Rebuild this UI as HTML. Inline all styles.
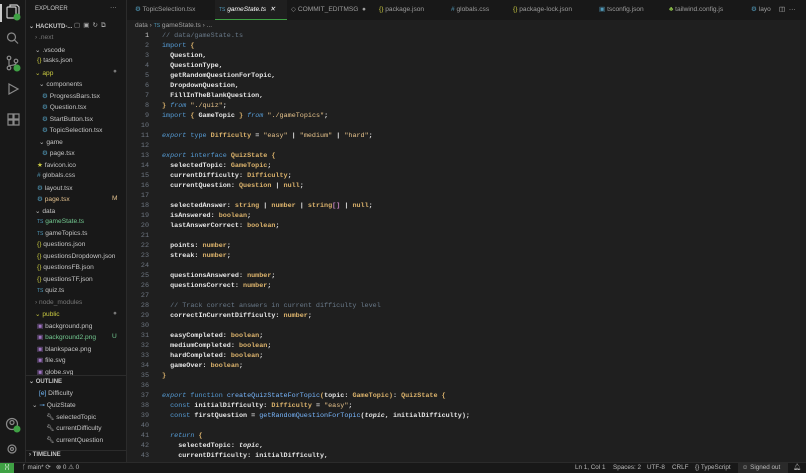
<!DOCTYPE html>
<html><head><meta charset="utf-8"><style>
*{margin:0;padding:0;box-sizing:border-box}
body{width:806px;height:473px;background:#1f1f1f;overflow:hidden;font-family:"Liberation Sans",sans-serif;color:#ccc;position:relative}
.act{position:absolute;left:0;top:0;width:26px;height:462px;background:#181818;border-right:1px solid #2b2b2b}
.side{position:absolute;left:26px;top:0;width:101px;height:462px;background:#181818;border-right:1px solid #2b2b2b;font-size:6.6px;overflow:hidden}
.side .r{position:absolute;white-space:nowrap;color:#c5c5c5}
.tabs{position:absolute;left:127px;top:0;right:0;height:20px;background:#181818;font-size:6.6px}
.tab{position:absolute;top:0;height:20px;line-height:20px;color:#9d9d9d;white-space:nowrap}
.bc{position:absolute;left:127px;top:20px;right:0;height:11px;font-size:6.6px;color:#a0a0a0;line-height:11px;padding-left:8px}
.code{position:absolute;left:127px;top:32px;right:6px;font-family:"Liberation Mono",monospace;font-size:6.75px}
.ln{position:absolute;width:22px;text-align:right;color:#6e7681;left:0}
.tx{position:absolute;left:35px;white-space:pre;color:#e6e6e6;font-weight:bold}
.k{color:#569cd6;font-weight:normal}.ki{color:#569cd6;font-style:italic;font-weight:normal}
.t{color:#dcb36c}.s{color:#e8c48c;font-weight:normal}.f{color:#79b8ff;font-weight:normal}.c{color:#6a7a8a;font-weight:normal}.p{color:#d4d4d4;font-weight:normal}
.status{position:absolute;left:0;top:462px;width:806px;height:11px;background:#181818;border-top:1px solid #2b2b2b;font-size:6.3px;color:#bbb;line-height:10px}
.status span{position:absolute;top:0;white-space:nowrap}
#sd{position:absolute;left:0;top:2px;width:101px;height:373px}
</style></head><body>
<div class="act">
 <div style="position:absolute;left:0;top:4px;width:2px;height:18px;background:#ccc"></div>
 <svg width="26" height="150" style="position:absolute;left:0;top:0" fill="none" stroke="#8a8a8a" stroke-width="1.2">
  <rect x="7" y="7" width="9" height="11" rx="1" stroke="#ccc"/><path d="M10 7V5h7l2 2v9h-3" stroke="#ccc"/>
  <circle cx="17" cy="17" r="3.5" fill="#3fa144" stroke="none"/>
  <circle cx="11.5" cy="37" r="4"/><path d="M14.5 40l3.5 3.5"/>
  <circle cx="9" cy="58" r="1.8"/><circle cx="9" cy="68" r="1.8"/><circle cx="16" cy="61" r="1.8"/><path d="M9 60v6M16 63c0 3-7 2-7 3"/>
  <circle cx="17" cy="68" r="3.5" fill="#3fa144" stroke="none"/>
  <path d="M9 84l9 5-9 5z"/><path d="M8 119h5v-5h-5zM14 119h5v-5h-5zM8 125h5v-5h-5zM14 125h5v-5h-5z"/>
 </svg>
 <svg width="26" height="60" style="position:absolute;left:0;top:412px" fill="none" stroke="#8a8a8a" stroke-width="1.2">
  <circle cx="12" cy="12" r="5.5"/><circle cx="12" cy="10.5" r="2"/><circle cx="17" cy="17" r="3.5" fill="#3fa144" stroke="none"/>
  <circle cx="12" cy="37" r="4"/><circle cx="12" cy="37" r="1.5"/>
 </svg>
</div>
<div class="side">
 <div class="r" style="left:9px;top:6px;font-size:6px">EXPLORER</div>
 <div class="r" style="left:84px;top:4px">···</div>
 <div id="sd">
 <div class="r" style="left:3px;top:21px;font-weight:bold;font-size:6px">⌄ HACKUTD-...</div>
 <div class="r" style="left:48px;top:19px;color:#aaa;letter-spacing:3px">▢▣↻⧉</div>
 <div class="r" style="left:9px;top:32px;color:#777">› .next</div>
 <div class="r" style="left:9px;top:44px">⌄ .vscode</div>
 <div class="r" style="left:11px;top:55px"><span style="color:#cbcb41">{}</span> tasks.json</div>
 <div class="r" style="left:9px;top:67px;color:#cbcb41">⌄ app</div>
 <div class="r" style="left:87px;top:66px;color:#777">●</div>
 <div class="r" style="left:13px;top:78px">⌄ components</div>
 <div class="r" style="left:16px;top:90px"><span style="color:#519aba">⚙</span> ProgressBars.tsx</div>
 <div class="r" style="left:16px;top:101px"><span style="color:#519aba">⚙</span> Question.tsx</div>
 <div class="r" style="left:16px;top:113px"><span style="color:#519aba">⚙</span> StartButton.tsx</div>
 <div class="r" style="left:16px;top:124px"><span style="color:#519aba">⚙</span> TopicSelection.tsx</div>
 <div class="r" style="left:13px;top:136px">⌄ game</div>
 <div class="r" style="left:16px;top:147px"><span style="color:#519aba">⚙</span> page.tsx</div>
 <div class="r" style="left:11px;top:159px"><span style="color:#cbcb41">★</span> favicon.ico</div>
 <div class="r" style="left:11px;top:170px"><span style="color:#519aba">#</span> globals.css</div>
 <div class="r" style="left:11px;top:182px"><span style="color:#519aba">⚙</span> layout.tsx</div>
 <div class="r" style="left:11px;top:193px;color:#e2c08d"><span style="color:#519aba">⚙</span> page.tsx</div>
 <div class="r" style="left:86px;top:193px;color:#e2c08d">M</div>
 <div class="r" style="left:9px;top:205px">⌄ data</div>
 <div class="r" style="left:11px;top:216px;color:#73c991"><span style="color:#519aba;font-size:5px">TS</span> gameState.ts</div>
 <div class="r" style="left:11px;top:228px"><span style="color:#519aba;font-size:5px">TS</span> gameTopics.ts</div>
 <div class="r" style="left:11px;top:239px"><span style="color:#cbcb41">{}</span> questions.json</div>
 <div class="r" style="left:11px;top:251px"><span style="color:#cbcb41">{}</span> questionsDropdown.json</div>
 <div class="r" style="left:11px;top:262px"><span style="color:#cbcb41">{}</span> questionsFB.json</div>
 <div class="r" style="left:11px;top:274px"><span style="color:#cbcb41">{}</span> questionsTF.json</div>
 <div class="r" style="left:11px;top:285px"><span style="color:#519aba;font-size:5px">TS</span> quiz.ts</div>
 <div class="r" style="left:9px;top:297px;color:#777">› node_modules</div>
 <div class="r" style="left:9px;top:308px;color:#cbcb41">⌄ public</div>
 <div class="r" style="left:87px;top:308px;color:#777">●</div>
 <div class="r" style="left:11px;top:320px"><span style="color:#a074c4">▣</span> background.png</div>
 <div class="r" style="left:11px;top:331px;color:#73c991"><span style="color:#a074c4">▣</span> background2.png</div>
 <div class="r" style="left:86px;top:331px;color:#73c991">U</div>
 <div class="r" style="left:11px;top:343px"><span style="color:#a074c4">▣</span> blankspace.png</div>
 <div class="r" style="left:11px;top:354px"><span style="color:#a074c4">▣</span> file.svg</div>
 <div class="r" style="left:11px;top:366px"><span style="color:#a074c4">▣</span> globe.svg</div>
 </div>
 <div style="position:absolute;left:0;top:375px;width:101px;height:90px;background:#181818;border-top:1px solid #2b2b2b"></div>
 <div class="r" style="left:3px;top:378px;font-weight:bold;font-size:6px">⌄ OUTLINE</div>
 <div class="r" style="left:13px;top:390px"><span style="color:#75beff">[e]</span> Difficulty</div>
 <div class="r" style="left:6px;top:401px">⌄ <span style="color:#75beff">⊸</span> QuizState</div>
 <div class="r" style="left:20px;top:413px">🔧︎ selectedTopic</div>
 <div class="r" style="left:20px;top:424px">🔧︎ currentDifficulty</div>
 <div class="r" style="left:20px;top:436px">🔧︎ currentQuestion</div>
 <div style="position:absolute;left:0;top:450px;width:101px;height:12px;background:#181818;border-top:1px solid #2b2b2b"></div>
 <div class="r" style="left:3px;top:452px;font-weight:bold;font-size:6px">› TIMELINE</div>
</div>
<div class="tabs">
 <div class="tab" style="left:8px;width:86px"><span style="color:#519aba">⚙</span> TopicSelection.tsx</div>
 <div class="tab" style="left:88px;width:72px;background:#1f1f1f;color:#fff;padding-left:4px;font-style:italic;border-bottom:1px solid #3fa144"><span style="color:#519aba;font-size:5px;font-style:normal">TS</span> gameState.ts &nbsp;✕</div>
 <div class="tab" style="left:164px"><span>◇</span> COMMIT_EDITMSG &nbsp;●</div>
 <div class="tab" style="left:252px"><span style="color:#cbcb41">{}</span> package.json</div>
 <div class="tab" style="left:324px"><span style="color:#519aba">#</span> globals.css</div>
 <div class="tab" style="left:386px"><span style="color:#cbcb41">{}</span> package-lock.json</div>
 <div class="tab" style="left:472px"><span style="color:#519aba">▣</span> tsconfig.json</div>
 <div class="tab" style="left:542px"><span style="color:#8dc149">♣</span> tailwind.config.js</div>
 <div class="tab" style="left:624px"><span style="color:#519aba">⚙</span> layo</div>
 <div class="tab" style="left:652px;color:#ccc">◫ &nbsp;···</div>
</div>
<div class="bc">data › <span style="color:#519aba;font-size:5px">TS</span> gameState.ts › ...</div>
<div class="code">
<div id="c"></div>
</div>
<div class="status">
 <div style="position:absolute;left:0;top:0;width:14px;height:10px;background:#3fa144;color:#fff;text-align:center">⟩⟨</div>
 <span style="left:22px">ᚴ main* ⟳ &nbsp; ⊗ 0 ⚠ 0</span>
 <span style="left:575px">Ln 1, Col 1</span>
 <span style="left:613px">Spaces: 2</span>
 <span style="left:647px">UTF-8</span>
 <span style="left:672px">CRLF</span>
 <span style="left:695px">{} TypeScript</span>
 <span style="left:738px;width:50px;height:10px;background:#2a2a2a;padding-left:4px">☺ Signed out</span>
 <span style="left:793px">🔔︎</span>
</div>
<script>
const L=[
'<span class="c">// data/gameState.ts</span>',
'<span class="k">import</span> <span class="t">{</span>',
'  Question,','  QuestionType,','  getRandomQuestionForTopic,','  DropdownQuestion,','  FillInTheBlankQuestion,',
'<span class="t">}</span> <span class="ki">from</span> <span class="s">"./quiz"</span>;',
'<span class="k">import</span> <span class="t">{</span> GameTopic <span class="t">}</span> <span class="ki">from</span> <span class="s">"./gameTopics"</span>;',
'',
'<span class="ki">export</span> <span class="k">type</span> <span class="t">Difficulty</span> = <span class="s">"easy"</span> | <span class="s">"medium"</span> | <span class="s">"hard"</span>;',
'',
'<span class="ki">export</span> <span class="k">interface</span> <span class="t">QuizState</span> <span class="t">{</span>',
'  selectedTopic: <span class="t">GameTopic</span>;','  currentDifficulty: <span class="t">Difficulty</span>;','  currentQuestion: <span class="t">Question</span> | <span class="t">null</span>;','',
'  selectedAnswer: <span class="t">string</span> | <span class="t">number</span> | <span class="t">string</span><span style="color:#c586c0">[]</span> | <span class="t">null</span>;',
'  isAnswered: <span class="t">boolean</span>;','  lastAnswerCorrect: <span class="t">boolean</span>;','',
'  points: <span class="t">number</span>;','  streak: <span class="t">number</span>;','',
'  questionsAnswered: <span class="t">number</span>;','  questionsCorrect: <span class="t">number</span>;','',
'  <span class="c">// Track correct answers in current difficulty level</span>',
'  correctInCurrentDifficulty: <span class="t">number</span>;','',
'  easyCompleted: <span class="t">boolean</span>;','  mediumCompleted: <span class="t">boolean</span>;','  hardCompleted: <span class="t">boolean</span>;','  gameOver: <span class="t">boolean</span>;',
'<span class="t">}</span>','',
'<span class="ki">export</span> <span class="k">function</span> <span class="f">createQuizStateForTopic</span><span class="t">(</span>topic: <span class="t">GameTopic</span><span class="t">)</span>: <span class="t">QuizState</span> <span class="t">{</span>',
'  <span class="k">const</span> initialDifficulty: <span class="t">Difficulty</span> = <span class="s">"easy"</span>;',
'  <span class="k">const</span> firstQuestion = <span class="f">getRandomQuestionForTopic</span>(<i>topic</i>, initialDifficulty);','',
'  <span class="ki">return</span> <span class="t">{</span>','    selectedTopic: <i>topic</i>,','    currentDifficulty: initialDifficulty,','    currentQuestion: firstQuestion,'];
let h='';L.forEach((s,i)=>{const y=i*10;h+=`<div class="ln" style="top:${y}px;${i==0?'color:#ccc':''}">${i+1}</div><div class="tx" style="top:${y}px">${s}</div>`});
document.getElementById('c').innerHTML=h;
document.querySelector('.code').style.height='430px';document.querySelector('.code').style.overflow='hidden';
</script>
</body></html>
